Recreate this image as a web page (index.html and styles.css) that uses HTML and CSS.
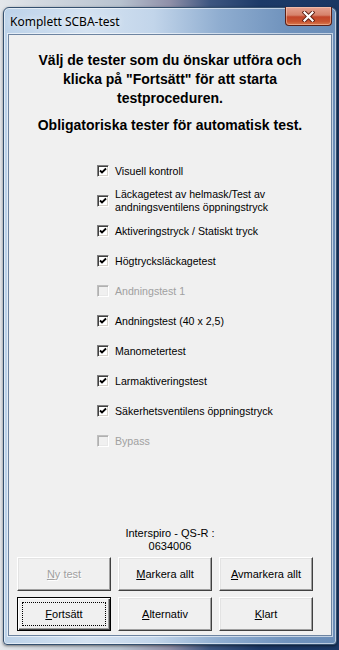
FILE: index.html
```html
<!DOCTYPE html>
<html lang="sv">
<head>
    <meta charset="UTF-8">
    <meta name="viewport" content="width=device-width, initial-scale=1.0">
    <title>Komplett SCBA-test</title>
    <link rel="stylesheet" href="styles.css">
</head>
<body>

    <div class="window">
        <div class="titlebar">
            <span class="title">Komplett SCBA-test</span>
            <button class="close" aria-label="Stäng">
                <svg width="13" height="11" viewBox="0 0 13 11">
                    <path d="M2.5 1.5 L10.5 9.5 M10.5 1.5 L2.5 9.5" stroke="#5b1d12" stroke-width="4" stroke-linecap="square"/>
                    <path d="M2.5 1.5 L10.5 9.5 M10.5 1.5 L2.5 9.5" stroke="#ffffff" stroke-width="2.2" stroke-linecap="square"/>
                </svg>
            </button>
        </div>

        <div class="client">
            <div class="intro">
                <p>Välj de tester som du önskar utföra och klicka på "Fortsätt" för att starta testproceduren.</p>
                <p>Obligatoriska tester för automatisk test.</p>
            </div>

            <ul class="tests">
                <li class="test"><span class="box checked"></span><span class="label">Visuell kontroll</span></li>
                <li class="test"><span class="box checked"></span><span class="label">Läckagetest av helmask/Test av<br>andningsventilens öppningstryck</span></li>
                <li class="test"><span class="box checked"></span><span class="label">Aktiveringstryck / Statiskt tryck</span></li>
                <li class="test"><span class="box checked"></span><span class="label">Högtrycksläckagetest</span></li>
                <li class="test disabled"><span class="box"></span><span class="label">Andningstest 1</span></li>
                <li class="test"><span class="box checked"></span><span class="label">Andningstest (40 x 2,5)</span></li>
                <li class="test"><span class="box checked"></span><span class="label">Manometertest</span></li>
                <li class="test"><span class="box checked"></span><span class="label">Larmaktiveringstest</span></li>
                <li class="test"><span class="box checked"></span><span class="label">Säkerhetsventilens öppningstryck</span></li>
                <li class="test disabled"><span class="box"></span><span class="label">Bypass</span></li>
            </ul>

            <div class="serial">Interspiro - QS-R :<br>0634006</div>

            <div class="buttons">
                <button class="btn" disabled><u>N</u>y test</button>
                <button class="btn"><u>M</u>arkera allt</button>
                <button class="btn"><u>A</u>vmarkera allt</button>
                <button class="btn default"><span class="focus"><u>F</u>ortsätt</span></button>
                <button class="btn"><u>A</u>lternativ</button>
                <button class="btn"><u>K</u>lart</button>
            </div>
        </div>
    </div>

</body>
</html>
```

FILE: styles.css
```css
/* Desktop behind the dialog */
body {
    margin: 0;
    height: 650px;
    overflow: hidden;
    background: linear-gradient(90deg, #e4e7eb 0, #d3d9e0 40px, #b7c2cf 120px, #8f8fa8 170px, #3d5680 210px, #1c3a68 260px, #1a3763 100%);
}

/* Window frame */
.window {
    box-sizing: border-box;
    width: 334px;
    margin: 7px 0 0 3px;
    padding: 0 4px 8px 4px;
    border: 1px solid #34506f;
    border-radius: 6px 6px 4px 4px;
    background: linear-gradient(90deg, #bcd2e9 0%, #d4e2f1 25%, #c2d5ea 45%, #8fadd0 65%, #7093bd 85%, #6a8db8 100%);
    box-shadow: inset 0 0 0 1px rgba(255, 255, 255, 0.55), 0 1px 3px rgba(0, 0, 0, 0.5);
}

.titlebar {
    display: flex;
    justify-content: space-between;
    align-items: flex-start;
    height: 26px;
}

.title {
    font-family: 'Noto Sans', 'Open Sans', sans-serif;
    font-size: 12px;
    color: #000;
    padding: 5px 0 0 2px;
    text-shadow: 0 0 6px rgba(255, 255, 255, 0.9);
}

.close {
    width: 47px;
    height: 19px;
    margin: -1px 0 0 0;
    padding: 0;
    border: 1px solid #5b1f15;
    border-top: none;
    border-radius: 0 0 4px 4px;
    background: linear-gradient(#e6a392 0%, #d6826b 45%, #c2452a 55%, #c8532f 80%, #d97a4f 100%);
    box-shadow: inset 0 0 0 1px rgba(255, 220, 200, 0.45);
    display: flex;
    align-items: center;
    justify-content: center;
}

/* Client area */
.client {
    box-sizing: border-box;
    height: 602px;
    display: flex;
    flex-direction: column;
    background-color: #f0f0f0;
    border: 1px solid #6d84a1;
    box-shadow: 0 0 0 1px rgba(255, 255, 255, 0.6);
    padding: 16px 0 4px 0;
    font-family: 'Liberation Sans', Arial, sans-serif;
    font-size: 11px;
    color: #000;
}

.intro {
    text-align: center;
    font-size: 14px;
    font-weight: bold;
    line-height: 19px;
    padding: 0 22px;
}

.intro p {
    margin: 0;
}

.intro p + p {
    margin-top: 8px;
}

.tests {
    list-style: none;
    margin: 21px 0 0 0;
    padding: 0 0 0 88px;
}

.test {
    display: flex;
    align-items: center;
    height: 30px;
    font-size: 10.6px;
    line-height: 13px;
}

.box {
    box-sizing: border-box;
    flex: none;
    width: 12px;
    height: 12px;
    margin-right: 6px;
    background-color: #fff;
    border: 1px solid;
    border-color: #808080 #ffffff #ffffff #808080;
    box-shadow: inset 1px 1px #404040, inset -1px -1px #d4d0c8;
}

.box.checked {
    background: #fff url("data:image/svg+xml,%3Csvg xmlns='http://www.w3.org/2000/svg' width='8' height='8'%3E%3Cpath d='M1 3.5 L3 5.5 L7 1.5' fill='none' stroke='%23000' stroke-width='1.8'/%3E%3C/svg%3E") no-repeat 1px 1px;
}

.test.disabled .label {
    color: #a0a0a0;
}

.test.disabled .box {
    background-color: #f0f0f0;
    border-color: #c0c0c0 #ffffff #ffffff #c0c0c0;
    box-shadow: inset 1px 1px #b0b0b0, inset -1px -1px #e8e8e8;
}

.serial {
    margin-top: auto;
    text-align: center;
    line-height: 13px;
}

/* Button grid */
.buttons {
    display: grid;
    grid-template-columns: repeat(3, 94px);
    grid-auto-rows: 34px;
    gap: 6px 7px;
    margin-top: 4px;
    padding-left: 8px;
}

.btn {
    box-sizing: border-box;
    padding: 0;
    font-family: 'Liberation Sans', Arial, sans-serif;
    font-size: 11px;
    color: #000;
    background-color: #f0f0f0;
    border: 1px solid;
    border-color: #ffffff #404040 #404040 #ffffff;
    box-shadow: inset -1px -1px #a0a0a0, inset 1px 1px #e3e3e3;
}

.btn:disabled {
    color: #a0a0a0;
    text-shadow: 1px 1px #ffffff;
}

.btn.default {
    border: 1px solid #000;
    box-shadow: inset 1px 1px #ffffff, inset -1px -1px #404040, inset -2px -2px #a0a0a0;
    padding: 4px;
}

.focus {
    display: flex;
    align-items: center;
    justify-content: center;
    height: 100%;
    border: 1px dotted #000;
    box-sizing: border-box;
}
```
